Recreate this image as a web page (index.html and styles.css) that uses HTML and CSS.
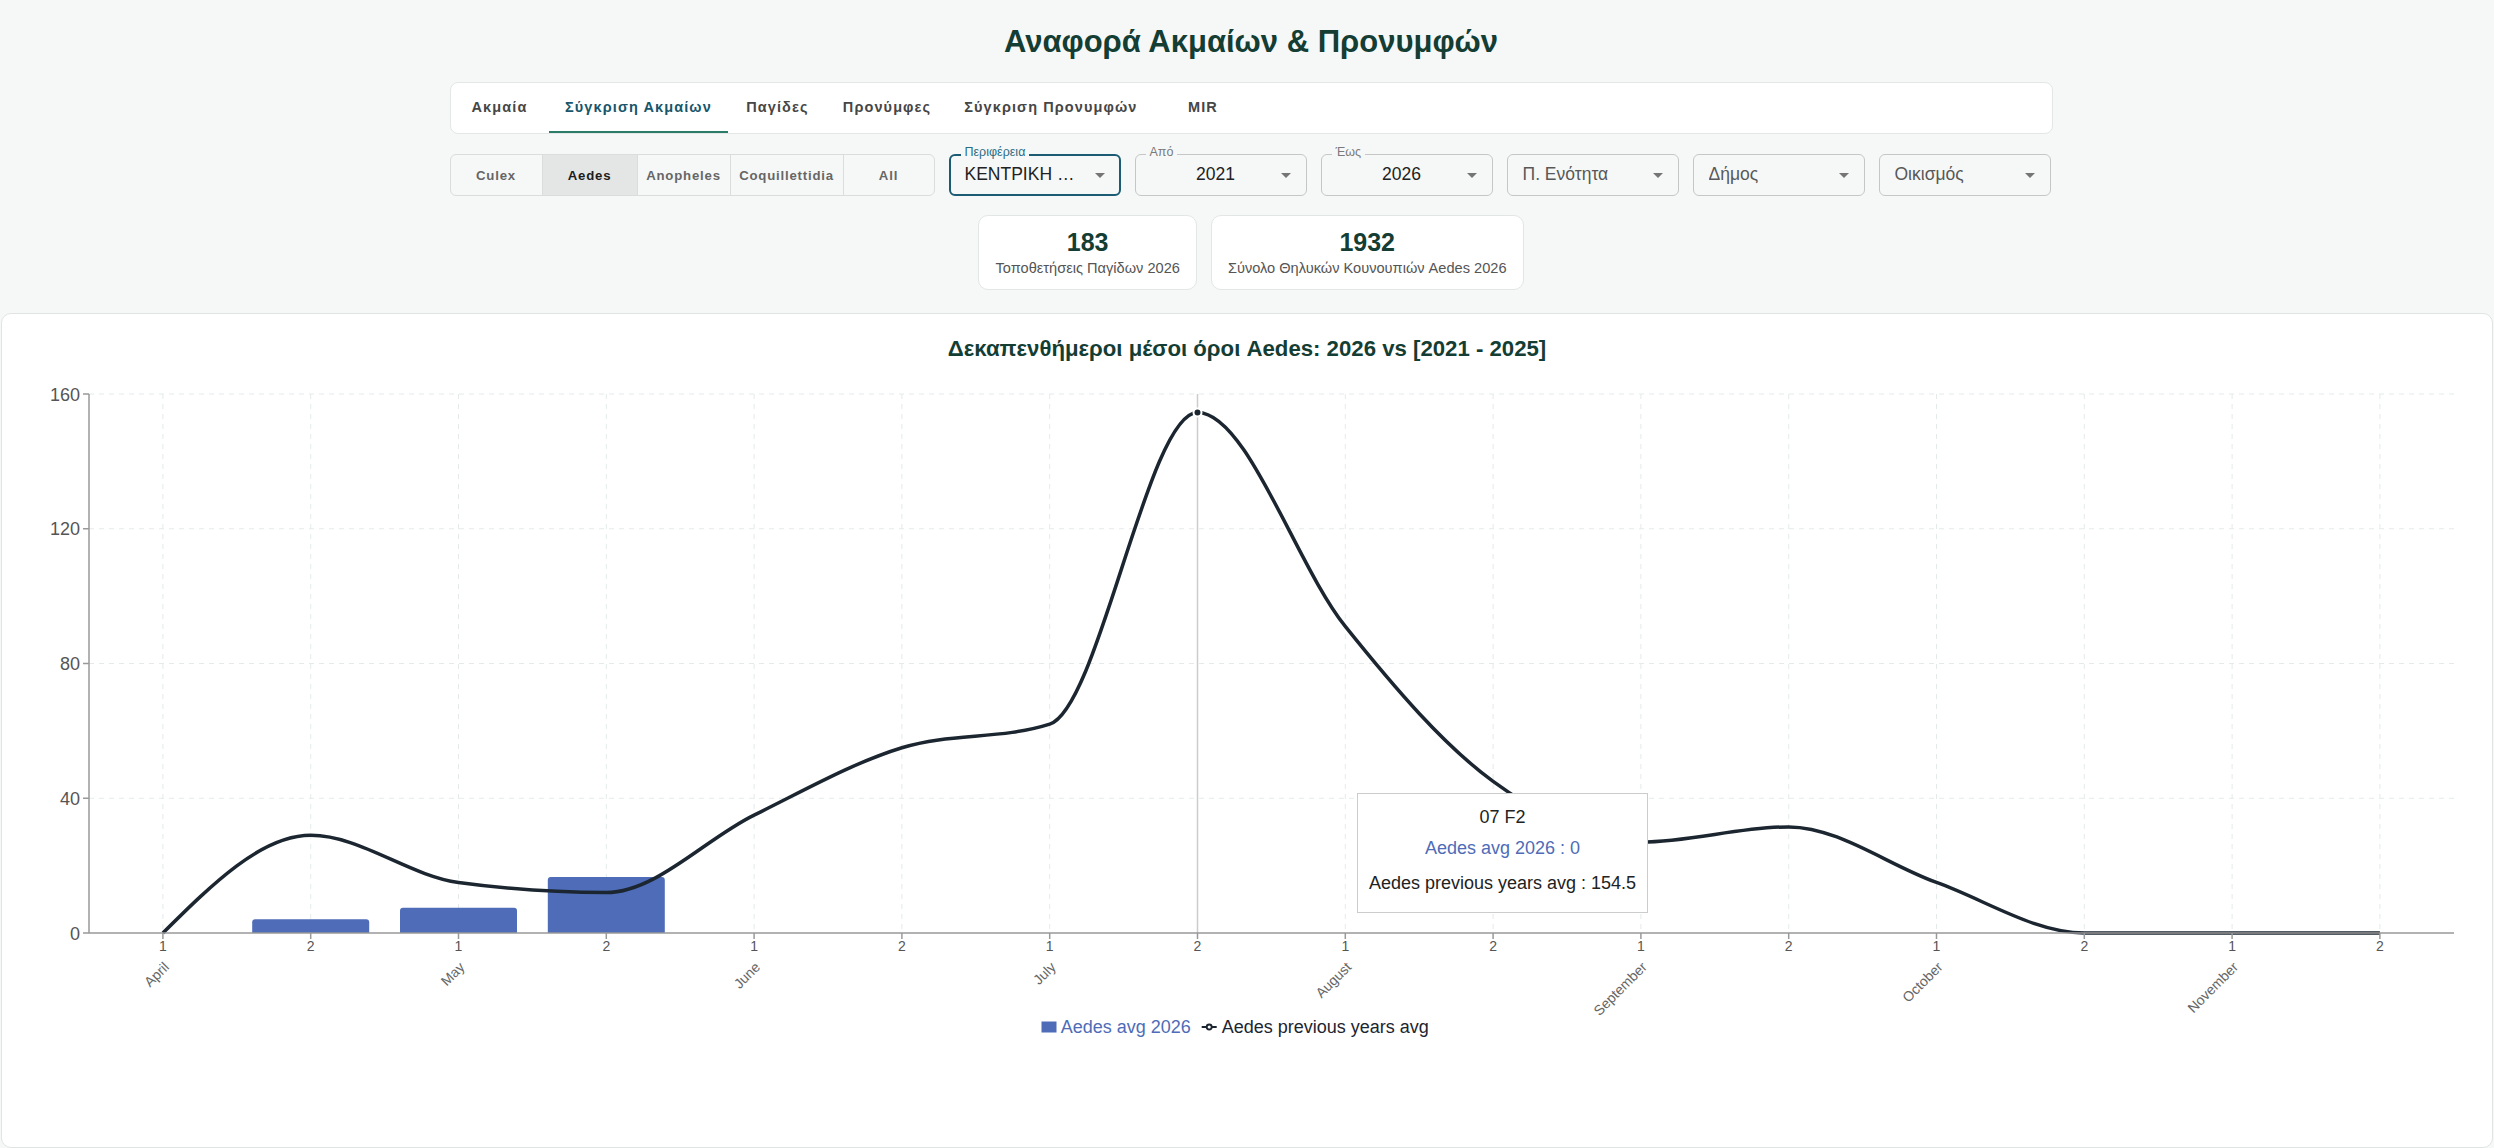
FILE: index.html
```html
<!DOCTYPE html>
<html lang="el">
<head>
<meta charset="utf-8">
<title>Αναφορά Ακμαίων &amp; Προνυμφών</title>
<link rel="stylesheet" href="styles.css">
</head>
<body>
<div class="top">
  <h1 class="page-title">Αναφορά Ακμαίων &amp; Προνυμφών</h1>
  <div class="container">
    <nav class="tabs">
      <div class="tab">Ακμαία</div>
      <div class="tab active">Σύγκριση Ακμαίων</div>
      <div class="tab">Παγίδες</div>
      <div class="tab">Προνύμφες</div>
      <div class="tab">Σύγκριση Προνυμφών</div>
      <div class="tab">MIR</div>
    </nav>
    <div class="filters">
      <div class="species">
        <button class="sp sp-culex">Culex</button>
        <button class="sp sp-aedes active">Aedes</button>
        <button class="sp sp-anopheles">Anopheles</button>
        <button class="sp sp-coq">Coquillettidia</button>
        <button class="sp sp-all">All</button>
      </div>
      <div class="field focused"><span class="field-label">Περιφέρεια</span><span class="field-value">ΚΕΝΤΡΙΚΗ …</span><span class="caret"></span></div>
      <div class="field centered"><span class="field-label">Από</span><span class="field-value">2021</span><span class="caret"></span></div>
      <div class="field centered"><span class="field-label">Έως</span><span class="field-value">2026</span><span class="caret"></span></div>
      <div class="field placeholder"><span class="field-value">Π. Ενότητα</span><span class="caret"></span></div>
      <div class="field placeholder"><span class="field-value">Δήμος</span><span class="caret"></span></div>
      <div class="field placeholder"><span class="field-value">Οικισμός</span><span class="caret"></span></div>
    </div>
    <div class="stats">
      <div class="stat"><div class="stat-num">183</div><div class="stat-label">Τοποθετήσεις Παγίδων 2026</div></div>
      <div class="stat"><div class="stat-num">1932</div><div class="stat-label">Σύνολο Θηλυκών Κουνουπιών Aedes 2026</div></div>
    </div>
  </div>
</div>

<section class="chart-card">
  <h2 class="chart-title">Δεκαπενθήμεροι μέσοι όροι Aedes: 2026 vs [2021 - 2025]</h2>
  <svg class="chart" width="2490" height="700" viewBox="0 0 2490 700" xmlns="http://www.w3.org/2000/svg">
    <g class="grid">
      <line x1="87" y1="33" x2="2452" y2="33"/>
      <line x1="87" y1="167.75" x2="2452" y2="167.75"/>
      <line x1="87" y1="302.5" x2="2452" y2="302.5"/>
      <line x1="87" y1="437.25" x2="2452" y2="437.25"/>
      <line x1="160.9" y1="33" x2="160.9" y2="572"/>
      <line x1="308.7" y1="33" x2="308.7" y2="572"/>
      <line x1="456.5" y1="33" x2="456.5" y2="572"/>
      <line x1="604.3" y1="33" x2="604.3" y2="572"/>
      <line x1="752.1" y1="33" x2="752.1" y2="572"/>
      <line x1="899.9" y1="33" x2="899.9" y2="572"/>
      <line x1="1047.7" y1="33" x2="1047.7" y2="572"/>
      <line x1="1195.5" y1="33" x2="1195.5" y2="572"/>
      <line x1="1343.3" y1="33" x2="1343.3" y2="572"/>
      <line x1="1491.1" y1="33" x2="1491.1" y2="572"/>
      <line x1="1638.9" y1="33" x2="1638.9" y2="572"/>
      <line x1="1786.7" y1="33" x2="1786.7" y2="572"/>
      <line x1="1934.5" y1="33" x2="1934.5" y2="572"/>
      <line x1="2082.3" y1="33" x2="2082.3" y2="572"/>
      <line x1="2230.1" y1="33" x2="2230.1" y2="572"/>
      <line x1="2377.9" y1="33" x2="2377.9" y2="572"/>
    </g>

    <g class="bars">
      <path d="M250.2,572 V561.3 Q250.2,558.3 253.2,558.3 H364.2 Q367.2,558.3 367.2,561.3 V572 Z"/>
      <path d="M398,572 V549.7 Q398,546.7 401,546.7 H512 Q515,546.7 515,549.7 V572 Z"/>
      <path d="M545.8,572 V519 Q545.8,516 548.8,516 H659.8 Q662.8,516 662.8,519 V572 Z"/>
    </g>

    <line class="cursor" x1="1195.5" y1="33" x2="1195.5" y2="572"/>

    <path class="series" transform="translate(160.9 572) scale(147.8 -3.369)" vector-effect="non-scaling-stroke"
      d="M0,0 C0.3333,14.5 0.6667,29 1,29 C1.3333,29 1.6667,17 2,15 C2.3333,13 2.6667,12 3,12 C3.3333,12 3.6667,27.833 4,35 C4.3333,42.167 4.6667,50.5 5,55 C5.3333,59.5 5.6667,57.333 6,62 C6.3333,66.667 6.6667,154.5 7,154.5 C7.3333,154.5 7.6667,109.25 8,91 C8.3333,72.75 8.6667,55.667 9,45 C9.3333,34.333 9.6667,27 10,27 C10.3333,27 10.6667,31.5 11,31.5 C11.3333,31.5 11.6667,20.25 12,15 C12.3333,9.75 12.6667,0 13,0 C13.3333,0 13.6667,0 14,0 C14.3333,0 14.6667,0 15,0"/>

    <circle class="active-dot" cx="1195.5" cy="51.5" r="4"/>

    <g class="axis">
      <line x1="87" y1="33" x2="87" y2="572"/>
      <line x1="87" y1="572" x2="2452" y2="572"/>
      <line x1="81" y1="33" x2="87" y2="33"/>
      <line x1="81" y1="167.75" x2="87" y2="167.75"/>
      <line x1="81" y1="302.5" x2="87" y2="302.5"/>
      <line x1="81" y1="437.25" x2="87" y2="437.25"/>
      <line x1="81" y1="572" x2="87" y2="572"/>
      <line x1="160.9" y1="572" x2="160.9" y2="578"/>
      <line x1="308.7" y1="572" x2="308.7" y2="578"/>
      <line x1="456.5" y1="572" x2="456.5" y2="578"/>
      <line x1="604.3" y1="572" x2="604.3" y2="578"/>
      <line x1="752.1" y1="572" x2="752.1" y2="578"/>
      <line x1="899.9" y1="572" x2="899.9" y2="578"/>
      <line x1="1047.7" y1="572" x2="1047.7" y2="578"/>
      <line x1="1195.5" y1="572" x2="1195.5" y2="578"/>
      <line x1="1343.3" y1="572" x2="1343.3" y2="578"/>
      <line x1="1491.1" y1="572" x2="1491.1" y2="578"/>
      <line x1="1638.9" y1="572" x2="1638.9" y2="578"/>
      <line x1="1786.7" y1="572" x2="1786.7" y2="578"/>
      <line x1="1934.5" y1="572" x2="1934.5" y2="578"/>
      <line x1="2082.3" y1="572" x2="2082.3" y2="578"/>
      <line x1="2230.1" y1="572" x2="2230.1" y2="578"/>
      <line x1="2377.9" y1="572" x2="2377.9" y2="578"/>
    </g>

    <g class="ylabels">
      <text x="78" y="39.5">160</text>
      <text x="78" y="174.25">120</text>
      <text x="78" y="309">80</text>
      <text x="78" y="443.75">40</text>
      <text x="78" y="578.5">0</text>
    </g>

    <g class="xlabels">
      <text x="160.9" y="590">1</text>
      <text x="308.7" y="590">2</text>
      <text x="456.5" y="590">1</text>
      <text x="604.3" y="590">2</text>
      <text x="752.1" y="590">1</text>
      <text x="899.9" y="590">2</text>
      <text x="1047.7" y="590">1</text>
      <text x="1195.5" y="590">2</text>
      <text x="1343.3" y="590">1</text>
      <text x="1491.1" y="590">2</text>
      <text x="1638.9" y="590">1</text>
      <text x="1786.7" y="590">2</text>
      <text x="1934.5" y="590">1</text>
      <text x="2082.3" y="590">2</text>
      <text x="2230.1" y="590">1</text>
      <text x="2377.9" y="590">2</text>
    </g>

    <g class="months">
      <text transform="translate(167.9 607) rotate(-45)">April</text>
      <text transform="translate(463.5 607) rotate(-45)">May</text>
      <text transform="translate(759.1 607) rotate(-45)">June</text>
      <text transform="translate(1054.7 607) rotate(-45)">July</text>
      <text transform="translate(1350.3 607) rotate(-45)">August</text>
      <text transform="translate(1645.9 607) rotate(-45)">September</text>
      <text transform="translate(1941.5 607) rotate(-45)">October</text>
      <text transform="translate(2237.1 607) rotate(-45)">November</text>
    </g>

    <g class="legend">
      <rect class="legend-bar" x="1039.5" y="660.5" width="15" height="11"/>
      <text class="legend-blue" x="1058.7" y="672">Aedes avg 2026</text>
      <path class="legend-line" d="M1199.7,666 H1204.7 M1209.7,666 H1214.7"/>
      <circle class="legend-dot" cx="1207.2" cy="666" r="2.5"/>
      <text class="legend-dark" x="1219.7" y="672">Aedes previous years avg</text>
    </g>
  </svg>

  <div class="tooltip">
    <p class="tt-label">07 F2</p>
    <p class="tt-blue">Aedes avg 2026 : 0</p>
    <p class="tt-prev">Aedes previous years avg : 154.5</p>
  </div>
</section>
</body>
</html>
```

FILE: styles.css
```css
html, body {
  margin: 0;
  padding: 0;
  height: 100%;
  overflow: hidden;
}

body {
  background: #f6f8f7;
  font-family: "Liberation Sans", Arial, sans-serif;
  color: #222;
}

.top {
  padding-left: 8px;
}

.page-title {
  margin: 0;
  padding-top: 24px;
  font-size: 31px;
  line-height: 35px;
  font-weight: 700;
  color: #143d34;
  text-align: center;
}

.container {
  width: 1603px;
  margin: 23px auto 0;
}

/* Tabs */
.tabs {
  display: flex;
  height: 52px;
  box-sizing: border-box;
  background: #fff;
  border: 1px solid #e3e7e6;
  border-radius: 8px;
  overflow: hidden;
}

.tab {
  min-width: 98px;
  box-sizing: border-box;
  padding: 0 16.5px;
  display: flex;
  align-items: center;
  justify-content: center;
  font-size: 14.5px;
  font-weight: 700;
  letter-spacing: 1.1px;
  color: #464646;
  white-space: nowrap;
  border-bottom: 2px solid transparent;
}

.tab.active {
  color: #17566b;
  border-bottom-color: #2b7c68;
}

/* Filters */
.filters {
  display: flex;
  gap: 14px;
  margin-top: 20px;
}

.species {
  display: flex;
  height: 42px;
  box-sizing: border-box;
  border: 1px solid #dadddc;
  border-radius: 6px;
  overflow: hidden;
}

.sp {
  box-sizing: border-box;
  width: 93px;
  padding: 0;
  border: none;
  border-left: 1px solid #dadddc;
  background: transparent;
  font-family: "Liberation Sans", Arial, sans-serif;
  font-size: 13.2px;
  font-weight: 700;
  letter-spacing: 0.8px;
  color: #666;
  white-space: nowrap;
}

.sp-culex {
  border-left: none;
  width: 91px;
}

.sp-aedes {
  width: 95px;
}

.sp-coq {
  width: 113px;
}

.sp-all {
  width: 91px;
}

.sp.active {
  background: #e4e5e5;
  color: #1c1c1c;
}

.field {
  position: relative;
  width: 172px;
  height: 42px;
  box-sizing: border-box;
  border: 1px solid #c6c6c6;
  border-radius: 6px;
  display: flex;
  align-items: center;
  padding: 0 15px 0 15px;
  font-size: 17.5px;
  color: #222;
}

.field.focused {
  border: 2px solid #1b5b73;
  padding: 0 14px 0 14px;
}

.field.placeholder {
  color: #585858;
}

.field-value {
  flex: 1;
  white-space: nowrap;
  overflow: hidden;
  padding-bottom: 2px;
}

.field.centered .field-value {
  text-align: center;
  padding-left: 8px;
}

.caret {
  width: 0;
  height: 0;
  border-left: 5px solid transparent;
  border-right: 5px solid transparent;
  border-top: 5px solid #757575;
  margin-left: 8px;
}

.field-label {
  position: absolute;
  top: -10px;
  left: 10px;
  padding: 0 4px;
  font-size: 12.5px;
  line-height: 14px;
  color: #7a7a7a;
  background: #f6f8f7;
}

.field.focused .field-label {
  top: -11px;
  left: 10px;
  color: #2b6c82;
}

/* Stats */
.stats {
  display: flex;
  justify-content: center;
  gap: 14px;
  margin-top: 19px;
}

.stat {
  background: #fff;
  border: 1px solid #e2e6e5;
  border-radius: 10px;
  padding: 12px 16px;
  text-align: center;
}

.stat-num {
  font-size: 25px;
  line-height: 28px;
  font-weight: 700;
  color: #143d34;
}

.stat-label {
  margin-top: 3px;
  font-size: 14.6px;
  line-height: 18px;
  color: #555;
  white-space: nowrap;
}

/* Chart card */
.chart-card {
  position: relative;
  margin: 23px 1px 0;
  height: 835px;
  box-sizing: border-box;
  background: #fff;
  border: 1px solid #e0e4e3;
  border-radius: 10px;
  overflow: hidden;
}

.chart-title {
  margin: 0;
  padding-top: 22px;
  font-size: 22.2px;
  line-height: 26px;
  font-weight: 700;
  color: #143d34;
  text-align: center;
}

.chart {
  display: block;
  margin-top: -1px;
}

.chart text {
  font-family: "Liberation Sans", Arial, sans-serif;
}

.grid line {
  stroke: #e4eaea;
  stroke-width: 1;
  stroke-dasharray: 5 5;
}

.bars path {
  fill: #4e6cb7;
}

.cursor {
  stroke: #cccccc;
  stroke-width: 1.5;
}

.series {
  fill: none;
  stroke: #1c2631;
  stroke-width: 3.5;
}

.active-dot {
  fill: #1c2631;
  stroke: #fff;
  stroke-width: 2;
}

.axis line {
  stroke: #999;
  stroke-width: 1.5;
}

.ylabels text {
  font-size: 18px;
  fill: #555;
  text-anchor: end;
}

.xlabels text {
  font-size: 14px;
  fill: #555;
  text-anchor: middle;
}

.months text {
  font-size: 14px;
  fill: #666;
  text-anchor: end;
}

.legend text {
  font-size: 18px;
}

.legend-bar {
  fill: #4e6cb7;
}

.legend-blue {
  fill: #4e6cb7;
}

.legend-dark {
  fill: #1c2530;
}

.legend-line {
  stroke: #1c2631;
  stroke-width: 1.9;
  fill: none;
}

.legend-dot {
  fill: #fff;
  stroke: #1c2631;
  stroke-width: 1.9;
}

/* Tooltip */
.tooltip {
  position: absolute;
  left: 1355px;
  top: 479px;
  width: 291px;
  height: 120px;
  box-sizing: border-box;
  background: #fff;
  border: 1px solid #cccccc;
  padding: 12px 8px 0;
  text-align: center;
  font-size: 18px;
  line-height: 22px;
  color: #222;
  white-space: nowrap;
}

.tooltip p {
  margin: 0;
}

.tt-blue {
  color: #4e6cb7;
  margin-top: 9px !important;
}

.tt-prev {
  margin-top: 13px !important;
}
```
